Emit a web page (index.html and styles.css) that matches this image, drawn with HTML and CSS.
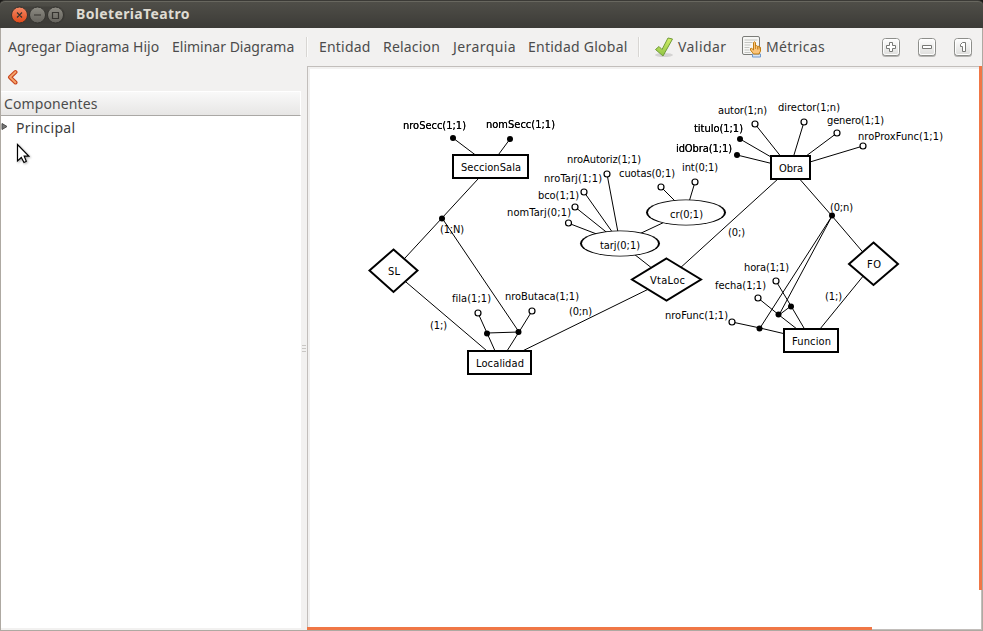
FILE: index.html
```html
<!DOCTYPE html>
<html lang="es">
<head>
<meta charset="utf-8">
<title>BoleteriaTeatro</title>
<link rel="stylesheet" href="styles.css">
</head>
<body>
<div class="window">
  <header class="titlebar">
    <svg class="controls" width="56" height="20" viewBox="0 0 56 20">
      <defs>
        <linearGradient id="red" x1="0" y1="0" x2="0" y2="1"><stop offset="0" stop-color="#f58a67"/><stop offset="1" stop-color="#df4717"/></linearGradient>
        <linearGradient id="gray" x1="0" y1="0" x2="0" y2="1"><stop offset="0" stop-color="#8d8b83"/><stop offset="1" stop-color="#64625c"/></linearGradient>
      </defs>
      <rect x="1" y="1.500" width="54" height="17" rx="8.500" fill="#393833" opacity=".5"/>
      <g stroke="#33322e"><circle cx="9.500" cy="10" r="8" fill="url(#red)"/><circle cx="27.500" cy="10" r="8" fill="url(#gray)"/><circle cx="45.500" cy="10" r="8" fill="url(#gray)"/></g>
      <path d="M7 7.500l5 5M12 7.500l-5 5M24 10h7M42.500 7.500h6v6h-6z" fill="none" stroke="#35332f" stroke-width="1.200"/>
    </svg>
    <h1>BoleteriaTeatro</h1>
  </header>
  <nav class="toolbar">
    <span class="item agregar">Agregar Diagrama Hijo</span>
    <span class="item eliminar">Eliminar Diagrama</span>
    <i class="sep"></i>
    <span class="item entidad">Entidad</span>
    <span class="item relacion">Relacion</span>
    <span class="item jerarquia">Jerarquia</span>
    <span class="item global">Entidad Global</span>
    <i class="sep"></i>
    <svg class="icon" width="22" height="22" viewBox="0 0 22 22">
      <defs><linearGradient id="green" x1="0" y1="0" x2="0" y2="1"><stop offset="0" stop-color="#d3ee67"/><stop offset="1" stop-color="#8fc444"/></linearGradient></defs>
      <ellipse cx="10" cy="19" rx="9" ry="2" fill="#000" opacity=".12"/>
      <path d="M1.500 13.500L5 10.500L8 13.500L14 2L18.500 3L9 20Z" fill="url(#green)" stroke="#719b3b" stroke-linejoin="round"/>
    </svg>
    <span class="item validar">Validar</span>
    <svg class="icon" width="20" height="22" viewBox="0 0 20 22">
      <rect x=".5" y=".5" width="17" height="18" rx="1.500" fill="#f7f7f5" stroke="#7b7c78"/>
      <path d="M2.500 4h13M2.500 6.500h8M2.500 9h6M2.500 11.500h5M2.500 14h5M2.500 16.500h6" stroke="#c4c5c1"/>
      <path d="M10.500 18h8v3h-8z" fill="#d9e6f6" stroke="#6e98cf"/>
      <path d="M11.500 13V6.500Q12.500 5 13.500 6.500V10Q14.500 9 15.500 10.300Q16.500 9.500 17 11Q18.500 10.500 18.500 12V15L17 18H11.500L8.500 14V12.500Q9.500 11.500 11.500 14Z" fill="#fac57e" stroke="#c17d11"/>
      <path d="M13.500 10v3M15.500 10.500v3M17 11v2.500" stroke="#c17d11" stroke-width=".8"/>
    </svg>
    <span class="item metricas">Métricas</span>
    <div class="zoom">
      <svg width="18" height="19" viewBox="0 0 18 19"><use href="#key"/><path d="M7.500 4.500h3v3h3v3h-3v3h-3v-3h-3v-3h3z" class="glyph"/></svg>
      <svg width="18" height="19" viewBox="0 0 18 19"><use href="#key"/><path d="M4.500 7.500h9v3h-9z" class="glyph"/></svg>
      <svg width="18" height="19" viewBox="0 0 18 19"><use href="#key"/><path d="M8.500 4.500h3v9h-3v-5h-2v-2z" class="glyph"/></svg>
    </div>
  </nav>
  <svg class="defs" width="0" height="0">
    <defs>
      <linearGradient id="keyfill" x1="0" y1="0" x2="0" y2="1"><stop offset="0" stop-color="#fff"/><stop offset="1" stop-color="#dddddb"/></linearGradient>
      <g id="key"><rect x="0" y="1.500" width="18" height="17.500" rx="3.500" fill="#b4b3b1"/><rect x=".5" y=".5" width="17" height="17" rx="3" fill="url(#keyfill)" stroke="#8d8e8a"/><rect x="1.500" y="1.500" width="15" height="15" rx="2" fill="none" stroke="#fff"/></g>
    </defs>
  </svg>
  <main class="panes">
    <aside class="sidebar">
      <div class="back">
        <svg width="12" height="16" viewBox="0 0 12 16"><path d="M8.500 3L3 8.200L8.500 13.500" fill="none" stroke="#c9441c" stroke-width="4" stroke-linecap="round" stroke-linejoin="round"/><path d="M8.500 3L3 8.200L8.500 13.500" fill="none" stroke="#f5a56c" stroke-width="1.800" stroke-linecap="round" stroke-linejoin="round"/></svg>
      </div>
      <div class="column-head"><span>Componentes</span></div>
      <div class="tree">
        <div class="row">
          <svg width="8" height="9" viewBox="0 0 8 9"><path d="M1 1.500L6 4.500L1 7.500Z" fill="#777" stroke="#4c4c4c"/></svg>
          <span>Principal</span>
        </div>
        <svg class="pointer" width="14" height="21" viewBox="0 0 14 21"><path d="M1.500 1.500V18L5.300 14.500L8 19.500L10.300 18.300L8.200 13.200H12.800Z" fill="#fff" stroke="#000" stroke-width="1.200"/></svg>
      </div>
    </aside>
    <div class="grip"><i></i><i></i><i></i></div>
    <section class="canvas">
      <svg class="diagram" width="669" height="558" viewBox="310 69 669 558">
        <g class="line">
          <path d="M453 138L490 166L510 139M490 166L442 218L393 271L500 362M442 218L519 332L487 333M478 313L487 333L500 362L519 332L532 311"/>
          <path d="M500 362L667 280L790 168L832 216L873 264L811 340"/>
          <path d="M568 223L620 243M575 207L620 243M584 192L620 243M607 174L620 243L667 280M620 243L686 212L661 187M686 212L695 182"/>
          <path d="M737 155L790 168M740 139L790 168M755 124L790 168L804 122M837 133L790 168L863 146"/>
          <path d="M832 216L760 328M832 216L779 315L791 306M776 281L791 306L811 340M758 298L779 315L811 340M732 322L760 328L811 340"/>
        </g>
        <g class="key-dot">
          <circle cx="453" cy="138" r="3"/><circle cx="510" cy="139" r="3"/><circle cx="442" cy="218.500" r="3"/><circle cx="487" cy="333.500" r="3"/><circle cx="518.500" cy="332" r="3"/>
          <circle cx="737" cy="155" r="3"/><circle cx="740" cy="139" r="3"/><circle cx="832" cy="215.500" r="3"/><circle cx="791" cy="306.500" r="3"/><circle cx="778.500" cy="314.500" r="3"/><circle cx="759.500" cy="328.500" r="3"/>
        </g>
        <g class="dot">
          <circle cx="568.500" cy="223" r="3"/><circle cx="575" cy="207" r="3"/><circle cx="584" cy="192" r="3"/><circle cx="607" cy="174" r="3"/><circle cx="661" cy="187" r="3"/><circle cx="695" cy="182" r="3"/>
          <circle cx="755" cy="124" r="3"/><circle cx="804" cy="122" r="3"/><circle cx="837" cy="133" r="3"/><circle cx="863" cy="146" r="3"/>
          <circle cx="776" cy="281" r="3"/><circle cx="758" cy="298" r="3"/><circle cx="732" cy="322" r="3"/><circle cx="478" cy="313" r="3"/><circle cx="532" cy="311" r="3"/>
        </g>
        <g class="node">
          <rect x="453" y="155" width="75" height="23"/><rect x="468" y="351" width="63" height="23"/><rect x="771" y="156" width="39" height="23"/><rect x="784" y="329" width="54" height="23"/>
          <path d="M393.500 249.500L417.500 270.500L393.500 292L369.500 270.500ZM666.500 258.500L701 279.500L666.500 300.500L632 279.500ZM873.500 242.500L898 264L873.500 285L849 264Z"/>
        </g>
        <g class="oval">
          <ellipse cx="620" cy="243.500" rx="40" ry="13"/><ellipse class="inner" cx="620" cy="243.500" rx="38" ry="12.200"/>
          <ellipse cx="686" cy="212.500" rx="40" ry="13"/><ellipse class="inner" cx="686" cy="212.500" rx="38" ry="12.200"/>
        </g>
        <g class="label">
          <text x="461" y="171" textLength="60">SeccionSala</text>
          <text x="476" y="367" textLength="48">Localidad</text>
          <text x="779" y="172" textLength="24">Obra</text>
          <text x="792" y="345" textLength="39">Funcion</text>
          <text x="388" y="275" textLength="12">SL</text>
          <text x="650" y="284" textLength="35">VtaLoc</text>
          <text x="867" y="268" textLength="14">FO</text>
          <text x="600" y="249" textLength="40">tarj(0;1)</text>
          <text x="670" y="218" textLength="33">cr(0;1)</text>
          <text x="440" y="233" textLength="24">(1;N)</text>
          <text x="430" y="329" textLength="17">(1;)</text>
          <text x="569" y="315" textLength="23">(0;n)</text>
          <text x="728" y="236" textLength="17">(0;)</text>
          <text x="830" y="211" textLength="23">(0;n)</text>
          <text x="825" y="300" textLength="17">(1;)</text>
          <text x="452" y="302" textLength="39">fila(1;1)</text>
          <text x="505" y="300" textLength="74">nroButaca(1;1)</text>
          <text x="567" y="163" textLength="74">nroAutoriz(1;1)</text>
          <text x="544" y="182" textLength="58">nroTarj(1;1)</text>
          <text x="538" y="199" textLength="41">bco(1;1)</text>
          <text x="507" y="216" textLength="64">nomTarj(0;1)</text>
          <text x="619" y="177" textLength="56">cuotas(0;1)</text>
          <text x="682" y="171" textLength="36">int(0;1)</text>
          <text x="718" y="114" textLength="49">autor(1;n)</text>
          <text x="778" y="111" textLength="62">director(1;n)</text>
          <text x="827" y="124" textLength="57">genero(1;1)</text>
          <text x="858" y="140" textLength="85">nroProxFunc(1;1)</text>
          <text x="744" y="271" textLength="45">hora(1;1)</text>
          <text x="715" y="289" textLength="51">fecha(1;1)</text>
          <text x="665" y="319" textLength="63">nroFunc(1;1)</text>
          <g class="identifier">
            <text x="403" y="129" textLength="63">nroSecc(1;1)</text>
            <text x="486" y="128" textLength="69">nomSecc(1;1)</text>
            <text x="694" y="132" textLength="49">titulo(1;1)</text>
            <text x="676" y="152" textLength="56">idObra(1;1)</text>
          </g>
        </g>
      </svg>
      <i class="edge-right"></i>
      <i class="edge-bottom"></i>
    </section>
  </main>
</div>
</body>
</html>
```
FILE: styles.css
```css
* { box-sizing: border-box; }
body { margin: 0; background: #1c1b19; font: 14px/20px "Noto Sans", "Open Sans", sans-serif; color: #4c4c4c; }
.window { width: 983px; height: 631px; display: flex; flex-direction: column; overflow: hidden; }
.titlebar { height: 28px; flex: none; display: flex; align-items: center; padding: 0 0 1px 10px; background: linear-gradient(#504f49, #3c3b37); border-top: 1px solid #3b3a36; border-radius: 5px 5px 0 0; box-shadow: inset 0 1px #68675f; }
.controls { margin-right: 10px; position: relative; top: .5px; }
h1 { margin: 0; font-size: 14px; line-height: 20px; font-weight: bold; letter-spacing: .36px; color: #dfdbd2; white-space: nowrap; }
.toolbar { height: 38px; flex: none; display: flex; align-items: center; background: #f2f1f0; padding: 0 10px 0 7px; border: solid #aea9a2; border-width: 0 1px; }
.item { flex: none; white-space: nowrap; }
.agregar { width: 164px; }
.eliminar { width: 134px; }
.sep { width: 2px; height: 20px; flex: none; border-left: 1px solid #d8d6d3; border-right: 1px solid #fbfbfa; }
.entidad { width: 64px; margin-left: 11px; letter-spacing: .2px; }
.relacion { width: 69px; letter-spacing: .2px; }
.jerarquia { width: 76px; padding-left: 1px; letter-spacing: .42px; }
.global { width: 110px; letter-spacing: .25px; }
.icon { flex: none; margin-left: 14px; }
.validar { width: 50px; margin-left: 2px; letter-spacing: .45px; }
.metricas { width: 70px; margin-left: 4px; letter-spacing: .35px; }
.zoom { display: flex; gap: 18px; margin-left: auto; }
.glyph { fill: #fff; stroke: #777875; }
.defs { position: absolute; }
.panes { flex: 1; min-height: 0; display: flex; background: #f2f1f0; border: 1px solid #aea9a2; border-top: 0; }
.sidebar { width: 300px; display: flex; flex-direction: column; padding-bottom: 2px; }
.back { height: 25px; padding: 3px 0 0 6px; }
.back svg { display: block; }
.column-head { height: 25px; padding: 2px 0 0 3px; background: linear-gradient(#f9f9f9, #e7e6e5); border-top: 1px solid #fff; border-bottom: 1px solid #aaa8a5; border-right: 1px solid #fff; letter-spacing: .1px; }
.column-head span { display: block; }
.tree { flex: 1; background: #fff; padding-top: 2px; color: #3c3c3c; }
.row { height: 20px; display: flex; align-items: center; gap: 7px; letter-spacing: .27px; }
.row svg { margin-top: -4px; }
.pointer { display: block; margin: 5px 0 0 15px; filter: drop-shadow(1px 1px 1px #0005); }
.grip { width: 6px; display: flex; flex-direction: column; justify-content: center; align-items: center; gap: 2px; }
.grip i { width: 4px; height: 1px; background: #c9c7c4; }
.canvas { flex: 1; position: relative; background: #fff; border: 1px solid #c2bebb; box-shadow: inset 2px 2px #f2f1f0; padding: 2px 0 0 2px; }
.diagram { display: block; }
.edge-right { position: absolute; right: -1px; top: -1px; width: 3px; height: 524px; background: #f07746; }
.edge-bottom { position: absolute; left: -1px; bottom: -1px; height: 3px; width: 565px; background: #f07746; }
.line { fill: none; stroke: #000; stroke-width: 1; }
.key-dot { fill: #000; }
.dot { fill: #fff; stroke: #000; stroke-width: 1.2; }
.node { fill: #fff; stroke: #000; stroke-width: 2; }
.oval { fill: #000; }
.inner { fill: #fff; }
.label { font: 11px "DejaVu Sans Condensed", "DejaVu Sans", sans-serif; fill: #000; }
.identifier { filter: drop-shadow(.4px 0 0 #000); }
```
